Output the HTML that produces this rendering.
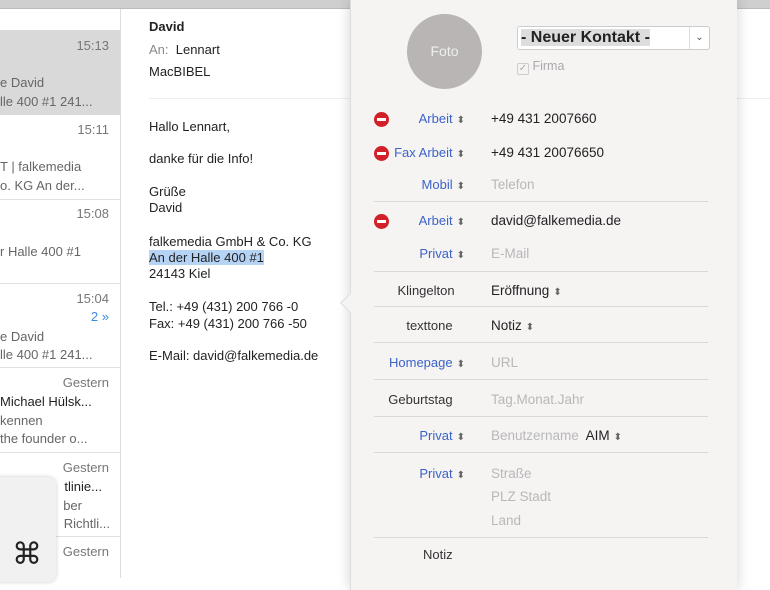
<!DOCTYPE html><html><head><meta charset="utf-8"><style>
*{margin:0;padding:0;box-sizing:border-box}
body{width:770px;height:578px;overflow:hidden;background:#fff;font-family:"Liberation Sans",sans-serif;position:relative;color:#222}
.abs{position:absolute;white-space:nowrap}
.top{position:absolute;left:0;top:0;width:770px;height:9px;background:#cfcfcf;border-bottom:1px solid #bbb}
.list{position:absolute;left:0;top:9px;width:121px;height:569px;border-right:1px solid #ddd;background:#fff;font-size:13px;color:#666}
.sep{position:absolute;left:0;width:120px;height:1px;background:#e0e0e0}
.t{position:absolute;right:11px;font-size:13px;color:#777}
.pop{position:absolute;left:350px;top:0;width:387px;height:590px;background:#f6f3f3;border-left:1px solid #ddd;box-shadow:0 0 12px rgba(0,0,0,.18)}
.lab{position:absolute;right:272px;font-size:13px;color:#3b63c9;text-align:right}
.lab.g{color:#333}
.ud{font-size:10px;color:#666;margin-left:4px}
.val{position:absolute;left:140px;font-size:13.5px;color:#222}
.ph{color:#b8b8b8}
.ps{position:absolute;left:23px;width:334px;height:1px;background:#dcd8d8}
.minus{position:absolute;left:23px;width:15px;height:15px;border-radius:50%;background:#d2202a}
.minus:after{content:"";position:absolute;left:3px;top:6px;width:9px;height:3px;background:#fff}
.mail{font-size:13px}
</style></head><body>
<div class="top"></div>
<div class="list">
<div class="abs" style="left:0;top:21px;width:120px;height:85px;background:#d9d9d9"></div>
<div class="t" style="top:29px">15:13</div>
<div class="abs" style="left:0;top:66px">e David</div>
<div class="abs" style="left:0;top:85px">lle 400 #1 241...</div>
<div class="t" style="top:113px">15:11</div>
<div class="abs" style="left:0;top:150px">T | falkemedia</div>
<div class="abs" style="left:0;top:169px">o. KG An der...</div>
<div class="sep" style="top:190px"></div>
<div class="t" style="top:197px">15:08</div>
<div class="abs" style="left:0;top:235px">r Halle 400 #1</div>
<div class="sep" style="top:274px"></div>
<div class="t" style="top:282px">15:04</div>
<div class="t" style="top:300px;color:#3a8be0">2 »</div>
<div class="abs" style="left:0;top:320px">e David</div>
<div class="abs" style="left:0;top:338px">lle 400 #1 241...</div>
<div class="sep" style="top:358px"></div>
<div class="t" style="top:366px">Gestern</div>
<div class="abs" style="left:0;top:385px;color:#222">Michael Hülsk...</div>
<div class="abs" style="left:0;top:404px">kennen</div>
<div class="abs" style="left:0;top:422px">the founder o...</div>
<div class="sep" style="top:443px"></div>
<div class="t" style="top:451px">Gestern</div>
<div class="abs" style="right:18px;top:470px;color:#222">tlinie...</div>
<div class="abs" style="right:38px;top:489px">ber</div>
<div class="abs" style="right:10px;top:507px">Richtli...</div>
<div class="sep" style="top:527px"></div>
<div class="t" style="top:535px">Gestern</div>
</div>
<div class="abs" style="left:-10px;top:477px;width:66px;height:105px;background:#f1f1f1;border-radius:8px;box-shadow:0 0 4px rgba(0,0,0,.2);font-size:30px;color:#222;padding:60px 0 0 22px">⌘</div>
<div class="mail">
<div class="abs" style="left:149px;top:19px;font-weight:bold">David</div>
<div class="abs" style="left:149px;top:42px"><span style="color:#888">An:</span>&nbsp; Lennart</div>
<div class="abs" style="left:149px;top:64px">MacBIBEL</div>
<div class="abs" style="left:149px;top:98px;width:621px;height:1px;background:#eee"></div>
<div class="abs" style="left:149px;top:119px">Hallo Lennart,</div>
<div class="abs" style="left:149px;top:151px">danke für die Info!</div>
<div class="abs" style="left:149px;top:184px">Grüße</div>
<div class="abs" style="left:149px;top:200px">David</div>
<div class="abs" style="left:149px;top:234px">falkemedia GmbH &amp; Co. KG</div>
<div class="abs" style="left:149px;top:250px;background:#b5d3f5">An der Halle 400 #1</div>
<div class="abs" style="left:149px;top:266px">24143 Kiel</div>
<div class="abs" style="left:149px;top:299px">Tel.: +49 (431) 200 766 -0</div>
<div class="abs" style="left:149px;top:316px">Fax: +49 (431) 200 766 -50</div>
<div class="abs" style="left:149px;top:348px">E-Mail: david@falkemedia.de</div>
</div>
<div class="pop">
<div class="abs" style="left:-8px;top:296px;width:14px;height:14px;background:#f6f3f3;transform:rotate(45deg);border-left:1px solid #ddd;border-bottom:1px solid #ddd"></div>
<div class="abs" style="left:56px;top:14px;width:75px;height:75px;border-radius:50%;background:#b9b5b5;color:#eee;font-size:14px;text-align:center;line-height:75px">Foto</div>
<div class="abs" style="left:166px;top:26px;width:193px;height:24px;background:#fff;border:1px solid #ccc;border-radius:3px;font-size:16px;font-weight:bold;padding:2px 3px"><span style="background:#ddd">- Neuer Kontakt -</span><span style="position:absolute;right:0;top:0;width:20px;height:22px;border-left:1px solid #ddd;font-size:10px;text-align:center;line-height:22px;font-weight:normal;color:#555">⌄</span></div>
<div class="abs" style="left:166px;top:59px;font-size:12.5px;color:#aaa"><span style="display:inline-block;width:12px;height:12px;border:1px solid #ccc;border-radius:2px;font-size:10px;line-height:10px;text-align:center;vertical-align:-1px">✓</span> Firma</div>
<div class="minus" style="top:112px"></div><div class="lab" style="top:111px">Arbeit<span class="ud">⬍</span></div><div class="val" style="top:111px">+49 431 2007660</div>
<div class="minus" style="top:146px"></div><div class="lab" style="top:145px">Fax Arbeit<span class="ud">⬍</span></div><div class="val" style="top:145px">+49 431 20076650</div>
<div class="lab" style="top:177px">Mobil<span class="ud">⬍</span></div><div class="val ph" style="top:177px">Telefon</div>
<div class="ps" style="top:201px"></div>
<div class="minus" style="top:214px"></div><div class="lab" style="top:213px">Arbeit<span class="ud">⬍</span></div><div class="val" style="top:213px">david@falkemedia.de</div>
<div class="lab" style="top:246px">Privat<span class="ud">⬍</span></div><div class="val ph" style="top:246px">E-Mail</div>
<div class="ps" style="top:271px"></div>
<div class="lab g" style="top:283px;right:270px">Klingelton<span class="ud" style="visibility:hidden">⬍</span></div><div class="val" style="top:283px">Eröffnung<span class="ud">⬍</span></div>
<div class="ps" style="top:306px"></div>
<div class="lab g" style="top:318px">texttone<span class="ud" style="visibility:hidden">⬍</span></div><div class="val" style="top:318px">Notiz<span class="ud">⬍</span></div>
<div class="ps" style="top:342px"></div>
<div class="lab" style="top:355px">Homepage<span class="ud">⬍</span></div><div class="val ph" style="top:355px">URL</div>
<div class="ps" style="top:379px"></div>
<div class="lab g" style="top:392px">Geburtstag<span class="ud" style="visibility:hidden">⬍</span></div><div class="val ph" style="top:392px">Tag.Monat.Jahr</div>
<div class="ps" style="top:416px"></div>
<div class="lab" style="top:428px">Privat<span class="ud">⬍</span></div><div class="val" style="top:428px"><span class="ph">Benutzername</span>&nbsp; AIM<span class="ud">⬍</span></div>
<div class="ps" style="top:452px"></div>
<div class="lab" style="top:466px">Privat<span class="ud">⬍</span></div><div class="val ph" style="top:466px">Straße</div>
<div class="val ph" style="top:489px">PLZ Stadt</div>
<div class="val ph" style="top:513px">Land</div>
<div class="ps" style="top:537px"></div>
<div class="lab g" style="top:547px">Notiz<span class="ud" style="visibility:hidden">⬍</span></div>
</div>
</body></html>
